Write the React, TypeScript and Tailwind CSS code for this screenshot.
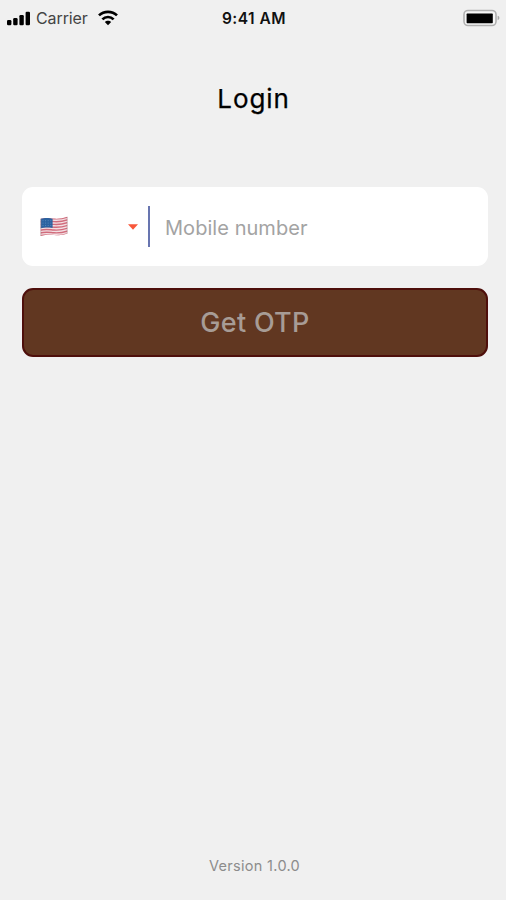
import { useState } from "react";

function SignalIcon() {
  return (
    <svg width="24" height="15" viewBox="0 0 24 15" fill="#000">
      <rect x="0" y="9" width="4.4" height="5.2" rx="1.2" />
      <rect x="6.2" y="7" width="4.4" height="7.2" rx="1.2" />
      <rect x="12.4" y="4" width="4.4" height="10.2" rx="1.2" />
      <rect x="18.6" y="0.8" width="4.4" height="13.4" rx="1.2" />
    </svg>
  );
}

function WifiIcon() {
  return (
    <svg width="20" height="16" viewBox="0 0 20 16" fill="none" stroke="#000" strokeWidth="2.7">
      <path d="M1 5.4C6 0.6 14 0.6 19 5.4" />
      <path d="M4.4 9.4C7.5 6.2 12.5 6.2 15.6 9.4" />
      <path d="M10 15.2L6.8 12.1C8.6 10.2 11.4 10.2 13.2 12.1Z" fill="#000" stroke="none" />
    </svg>
  );
}

function BatteryIcon() {
  return (
    <svg width="38" height="18" viewBox="0 0 38 18">
      <rect x="1" y="1.5" width="32" height="15" rx="4" fill="#f6f6f6" stroke="#b0b0b0" strokeWidth="1.6" />
      <rect x="3.6" y="4.6" width="26.2" height="9.6" rx="0.6" fill="#000" />
      <path d="M34.6 6.8C37 7.4 37 10.6 34.6 11.2Z" fill="#a8a8a8" />
    </svg>
  );
}

function FlagIcon() {
  return (
    <svg width="28" height="22" viewBox="0 0 28 22">
      <defs>
        <clipPath id="flag">
          <path d="M0.8 2.8C6 1.3 9 2.2 14 2.6C19 2.9 23 2.2 27.2 0.8V17.6C23 19.3 19 19.4 14 18.9C9 18.5 6 18.4 0.8 20Z" />
        </clipPath>
      </defs>
      <g clipPath="url(#flag)">
        <rect width="28" height="22" fill="#f3dfe3" />
        <g fill="none" stroke="#d16c7c" strokeWidth="1.4">
          <path d="M0 3C6 1.5 9 2.4 14 2.8S23 2.5 28 0.9" />
          <path d="M0 5.8C6 4.3 9 5.2 14 5.6S23 5.3 28 3.7" />
          <path d="M0 8.6C6 7.1 9 8 14 8.4S23 8.1 28 6.5" />
          <path d="M0 11.4C6 9.9 9 10.8 14 11.2S23 10.9 28 9.3" />
          <path d="M0 14.2C6 12.7 9 13.6 14 14S23 13.7 28 12.1" />
          <path d="M0 17C6 15.5 9 16.4 14 16.8S23 16.5 28 14.9" />
          <path d="M0 19.8C6 18.3 9 19.2 14 19.6S23 19.3 28 17.7" />
        </g>
        <path d="M0 2C5 1.2 8 1.8 12.6 2.4V12C8 11.5 5 11.2 0 12.6Z" fill="#2b62a0" />
        <path d="M2.5 4.7H12M2.5 7.1H12M2.5 9.5H12" stroke="#6c97c6" strokeWidth="0.7" strokeDasharray="1 1.6" />
      </g>
      <path d="M0.8 2.8V20M27.2 0.8V17.6" stroke="#a37b83" strokeWidth="0.5" />
    </svg>
  );
}

function StatusBar() {
  return (
    <div className="grid h-9 grid-cols-3 items-center pl-[7px] pr-[5px]">
      <div className="flex items-center">
        <SignalIcon />
        <span className="ml-[5px] text-[16px] leading-none tracking-[-0.1px] text-[#444]">Carrier</span>
        <span className="ml-[10px]">
          <WifiIcon />
        </span>
      </div>
      <span className="pt-px text-center text-[15.5px] leading-none font-semibold tracking-[0.5px] text-[#111]">9:41 AM</span>
      <div className="flex justify-end">
        <BatteryIcon />
      </div>
    </div>
  );
}

export default function App() {
  const [mobile, setMobile] = useState<string>("");

  return (
    <div className="flex h-[900px] w-[506px] flex-col bg-[#f0f0f0] font-['Inter','Liberation_Sans',sans-serif]">
      <StatusBar />
      <h1 className="mt-[43px] pl-px text-center text-[26px] leading-10 tracking-[0.9px] text-black [-webkit-text-stroke:0.25px_black]">
        Login
      </h1>

      <div className="mt-[68px] flex flex-col gap-[22px] pr-[18px] pl-[22px]">
        <div className="flex h-[79px] items-center rounded-[11px] bg-white">
          <button className="flex w-[126px] items-center justify-between pt-px pr-[10px] pl-[18px]">
            <FlagIcon />
            <svg width="10" height="6" viewBox="0 0 10 6">
              <path d="M0 0.3H10L5 5.8Z" fill="#f8573a" />
            </svg>
          </button>
          <div className="h-[41px] w-[2px] bg-[#6875b0]" />
          <input
            type="tel"
            value={mobile}
            onChange={(e) => setMobile(e.target.value)}
            placeholder="Mobile number"
            className="ml-[15px] w-[300px] pt-[2px] text-[20px] tracking-[0.05px] outline-none placeholder:text-[#a3a3a3]"
          />
        </div>
        <button className="h-[69px] rounded-[11px] border-2 border-[#4e0f0b] bg-[#613721] text-[27px] leading-none font-medium tracking-[0.3px] text-[#a79c96]">
          Get OTP
        </button>
      </div>

      <p className="mt-auto mb-[24px] pl-[3px] text-center text-[14.5px] leading-5 tracking-[0.3px] text-[#8c8c8c]">
        Version 1.0.0
      </p>
    </div>
  );
}
